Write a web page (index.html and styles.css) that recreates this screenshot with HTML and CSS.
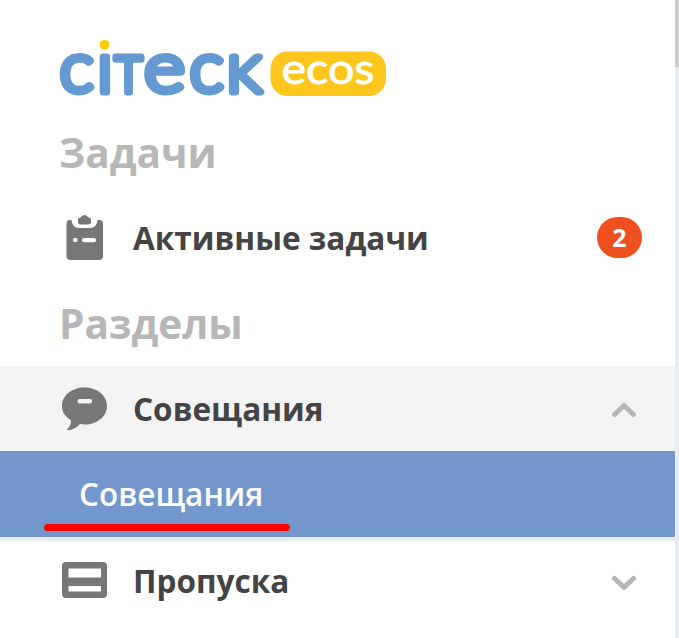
FILE: index.html
```html
<!DOCTYPE html>
<html lang="ru">
<head>
<meta charset="utf-8">
<title>Citeck ECOS</title>
<link rel="stylesheet" href="styles.css">
</head>
<body>
<div class="app">
  <nav class="menu">
    <header class="brand">
      <svg class="logo" width="330" height="60" viewBox="58 38 330 60">
        <g class="word">
          <text class="round" x="59.500" y="92" textLength="34" lengthAdjust="spacingAndGlyphs">c</text>
          <text class="round" x="97" y="92">ı</text>
          <text class="cap" x="115" y="92" textLength="27" lengthAdjust="spacingAndGlyphs">T</text>
          <text class="round" x="144" y="92" textLength="41" lengthAdjust="spacingAndGlyphs">e</text>
          <text class="round" x="189.500" y="92" textLength="34" lengthAdjust="spacingAndGlyphs">c</text>
          <text class="cap" x="227" y="92" textLength="34" lengthAdjust="spacingAndGlyphs">K</text>
        </g>
        <circle cx="104.500" cy="44.800" r="4.900" fill="#ffcb05"/>
        <rect x="270.500" y="51.500" width="115.500" height="44.500" rx="17" fill="#ffc61e"/>
        <text class="ecos" x="281.500" y="84" textLength="93" lengthAdjust="spacingAndGlyphs">ecos</text>
      </svg>
    </header>

    <h2 class="title">Задачи</h2>
    <a class="item">
      <svg class="icon" width="48" height="48" viewBox="0 0 48 48">
        <path fill="#777" d="M9.500 8H11.500Q12.500 16 19 16H30Q36.500 16 37.500 8H39.500Q43 8 43 12V44Q43 48 39 48H10.500Q6.500 48 6.500 44V12Q6.500 8 9.500 8ZM18 7.500Q18 5.500 20.500 5.500Q22 3 24.500 3Q27 3 28.500 5.500Q31 5.500 31 8V10Q31 12.500 28 12.500H21Q18 12.500 18 10Z"/>
        <g fill="#fff"><circle cx="15.300" cy="28" r="2.300"/><rect x="22" y="26" width="14" height="4.200" rx="2"/></g>
      </svg>
      <span class="label">Активные задачи</span>
      <span class="badge">2</span>
    </a>

    <h2 class="title">Разделы</h2>
    <a class="item item-open">
      <svg class="icon" width="48" height="48" viewBox="0 0 48 48">
        <path fill="#777" d="M24.500 4.500C37 4.500 47 12.300 47 23C47 33.500 37 41.500 25 41.500L20 41C17 44.500 12.500 47 8 47.200C7.200 47 7 46.500 7.400 46C10.500 43 11.500 40 10.700 37C5 33.500 2 29 2 23C2 12.300 12 4.500 24.500 4.500Z"/>
        <rect x="17.500" y="16" width="14.500" height="4.500" rx="2" fill="#f3f3f3"/>
      </svg>
      <span class="label">Совещания</span>
      <svg class="chevron" width="26" height="16" viewBox="0 0 26 16"><path d="M3.500 12.500L13 3.500L22.500 12.500"/></svg>
    </a>
    <a class="item subitem"><span>Совещания</span><i class="mark"></i></a>
    <a class="item item-last">
      <svg class="icon" width="48" height="48" viewBox="0 0 48 48">
        <path fill="#777" fill-rule="evenodd" d="M6 7H43Q47 7 47 11V39Q47 43 43 43H6Q2 43 2 39V11Q2 7 6 7ZM8.500 13.500V22.500H41V13.500ZM8.500 31V36.500H41V31Z"/>
      </svg>
      <span class="label">Пропуска</span>
      <svg class="chevron" width="26" height="16" viewBox="0 0 26 16"><path d="M3.500 3.500L13 12.500L22.500 3.500"/></svg>
    </a>
  </nav>
  <div class="scrollbar"><div class="thumb"></div></div>
</div>
</body>
</html>
```

FILE: styles.css
```css
* { box-sizing: border-box; }

body {
  margin: 0;
  background: #fff;
  color: #444;
  font-family: "Open Sans", "Noto Sans", sans-serif;
}

.app { display: flex; height: 638px; overflow: hidden; }
.menu { flex: 1; }

.brand { height: 110px; padding: 38px 0 0 58px; }
.logo { display: block; overflow: visible; }
.word {
  fill: #6599d1;
  stroke: #6599d1;
  stroke-width: 7px;
  stroke-linejoin: round;
  font-family: Lato, sans-serif;
  font-weight: 300;
}
.round { font-size: 71px; }
.cap { font-size: 50px; }
.ecos {
  fill: #fff;
  stroke: #fff;
  stroke-width: 0.800px;
  font: 400 43px Lato, sans-serif;
}

.title {
  height: 85px;
  margin: 0;
  padding-left: 59px;
  color: #b7b7b7;
  font-size: 40.500px;
  font-weight: 700;
  line-height: 85px;
}

.item {
  display: flex;
  align-items: center;
  height: 86px;
  padding: 0 33px 0 60px;
  font-size: 31.550px;
  line-height: 44px;
}
.icon { flex: none; margin: 0 25px 4px 0; }
.label { flex: 1; font-weight: 700; }

.badge {
  width: 45px;
  height: 41px;
  margin-bottom: 2px;
  border-radius: 20.500px;
  background: #ee4f1e;
  color: #fff;
  font-size: 25px;
  font-weight: 700;
  line-height: 40px;
  text-align: center;
}

.item-open { height: 85px; padding-right: 38px; background: #f3f3f3; }
.subitem {
  position: relative;
  padding-left: 79px;
  background: #7396cc;
  color: #fff;
  font-weight: 600;
}
.mark {
  position: absolute;
  left: 44px;
  bottom: 6px;
  width: 246px;
  height: 7px;
  border-radius: 4px;
  background: #f00;
}
.item-last { height: 101px; padding-right: 38px; padding-bottom: 17px; border-top: 4px solid #e6ecef; }

.chevron { margin-top: 3px; fill: none; stroke: #b7b7b7; stroke-width: 5px; stroke-linecap: round; stroke-linejoin: round; }

.scrollbar { width: 4px; background: #e6ecef; }
.thumb { height: 67px; background: #ccc; }
```
